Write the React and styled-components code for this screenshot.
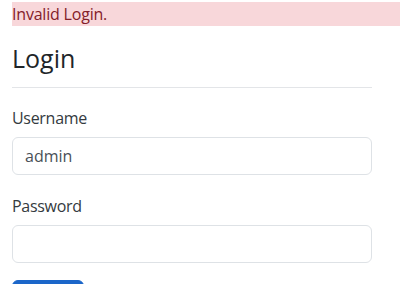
import styled, { createGlobalStyle } from 'styled-components';

const GlobalStyle = createGlobalStyle`
    * {
        box-sizing: border-box;
    }
    body {
        margin: 0;
        background: #fff;
        font-family: "Segoe UI", "Open Sans", "Noto Sans", sans-serif;
        font-size: 16px;
        color: #212529;
        overflow: hidden;
    }
`;

export default function App() {
    return (
        <>
            <GlobalStyle />
            <Page>
                <Alert>Invalid Login.</Alert>
                <Form onSubmit={(e) => e.preventDefault()}>
                    <Title>Login</Title>
                    <Divider />
                    <Field>
                        <Label htmlFor="username">Username</Label>
                        <Input id="username" type="text" defaultValue="admin" />
                    </Field>
                    <Field>
                        <Label htmlFor="password">Password</Label>
                        <Input id="password" type="password" />
                    </Field>
                    <SubmitButton type="submit">Log in</SubmitButton>
                </Form>
            </Page>
        </>
    );
}

const Page = styled.div`
    padding: 2px 0 0 12px;
    display: flex;
    flex-direction: column;
`;

const Alert = styled.div`
    height: 24px;
    line-height: 24px;
    background: #f8d7da;
    color: #842029;
    font-size: 16px;
    letter-spacing: -0.2px;
    white-space: nowrap;
`;

const Form = styled.form`
    width: 360px;
    display: flex;
    flex-direction: column;
`;

const Title = styled.h3`
    margin: 17px 0 0;
    font-size: 25px;
    font-weight: 500;
    line-height: 30px;
    color: #212529;
`;

const Divider = styled.hr`
    margin: 14px 0 18px;
    border: 0;
    border-top: 1px solid #e3e5e8;
    opacity: 1;
`;

const Field = styled.div`
    display: flex;
    flex-direction: column;
    margin-bottom: 19px;
`;

const Label = styled.label`
    line-height: 24px;
    margin-bottom: 7px;
    color: #343a40;
    letter-spacing: -0.3px;
`;

const Input = styled.input`
    height: 38px;
    padding: 6px 12px;
    font: inherit;
    line-height: 1.5;
    color: #495057;
    background: #fff;
    border: 1px solid #dee2e6;
    border-radius: 6px;
    outline: none;
`;

const SubmitButton = styled.button`
    align-self: flex-start;
    width: 72px;
    height: 38px;
    margin-top: -2px;
    font: inherit;
    color: #fff;
    background: #1b66c9;
    border: 1px solid #1b66c9;
    border-radius: 6px;
`;
